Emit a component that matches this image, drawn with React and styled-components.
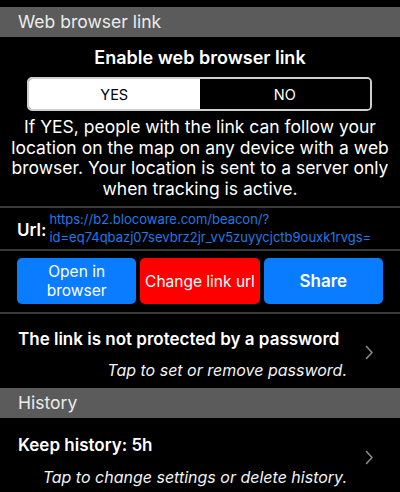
import React, { useState } from "react";
import styled, { createGlobalStyle } from "styled-components";

const GlobalStyle = createGlobalStyle`
  body {
    margin: 0;
    background: #000;
    font-family: Inter, "Liberation Sans", Arial, sans-serif;
    color: #fff;
  }
`;

const Chevron = () => (
  <ChevronBox>
    <svg width="9" height="15" viewBox="0 0 9 15">
      <path d="M1.5 1.5 L7 7.5 L1.5 13.5" fill="none" stroke="#8a8a8a" strokeWidth="1.6" strokeLinecap="round" strokeLinejoin="round" />
    </svg>
  </ChevronBox>
);

const App = () => {
  const [enabled, setEnabled] = useState(true);

  return (
    <Page>
      <GlobalStyle />
      <SectionHeader>Web browser link</SectionHeader>
      <Title>Enable web browser link</Title>
      <Segmented>
        <Segment $active={enabled} onClick={() => setEnabled(true)}>YES</Segment>
        <Segment $active={!enabled} onClick={() => setEnabled(false)}>NO</Segment>
      </Segmented>
      <Description>
        If YES, people with the link can follow your
        <br />
        location on the map on any device with a web
        <br />
        browser. Your location is sent to a server only
        <br />
        when tracking is active.
      </Description>
      <Divider />
      <UrlRow>
        <UrlLabel>Url:</UrlLabel>
        <UrlLink>
          https://b2.blocoware.com/beacon/?
          <br />
          id=eq74qbazj07sevbrz2jr_vv5zuyycjctb9ouxk1rvgs=
        </UrlLink>
      </UrlRow>
      <Divider />
      <ButtonRow>
        <ActionButton $color="#0a7cff">Open in<br />browser</ActionButton>
        <ActionButton $color="#ff0000">Change link url</ActionButton>
        <ActionButton $color="#0a7cff" $bold>Share</ActionButton>
      </ButtonRow>
      <Divider />
      <TapRow $height={74} $top={15}>
        <TapText $gap={11}>
          <RowTitle>The link is not protected by a password</RowTitle>
          <RowHint>Tap to set or remove password.</RowHint>
        </TapText>
        <Chevron />
      </TapRow>
      <SectionHeader>History</SectionHeader>
      <TapRow $height={73} $top={17}>
        <TapText $gap={12}>
          <RowTitle>Keep history: 5h</RowTitle>
          <RowHint>Tap to change settings or delete history.</RowHint>
        </TapText>
        <Chevron />
      </TapRow>
    </Page>
  );
};

export default App;

const Page = styled.div`
  width: 400px;
  height: 492px;
  overflow: hidden;
  padding-top: 7px;
  box-sizing: border-box;
  background: #000;
`;

const SectionHeader = styled.div`
  height: 30px;
  background: #5b5b5b;
  color: #ececec;
  font-size: 17.5px;
  line-height: 30px;
  padding-left: 18px;
`;

const Title = styled.div`
  margin-top: 10px;
  text-align: center;
  font-weight: 600;
  font-size: 18px;
  line-height: 22px;
`;

const Segmented = styled.div`
  display: flex;
  margin: 8px 28px 0 27px;
  height: 34px;
  box-sizing: border-box;
  border: 2px solid #cfcfcf;
  border-radius: 5px;
  overflow: hidden;
`;

const Segment = styled.div`
  flex: 1;
  display: flex;
  align-items: center;
  justify-content: center;
  font-size: 14.5px;
  background: ${({ $active }) => ($active ? "#fff" : "#000")};
  color: ${({ $active }) => ($active ? "#000" : "#fff")};
  cursor: pointer;
`;

const Description = styled.div`
  margin-top: 6px;
  text-align: center;
  white-space: nowrap;
  font-size: 17.5px;
  line-height: 20.7px;
  height: 89px;
`;

const Divider = styled.div`
  height: 2px;
  background: #3a3a3a;
`;

const UrlRow = styled.div`
  display: flex;
  align-items: center;
  height: 41px;
  padding-left: 17px;
  gap: 3px;
`;

const UrlLabel = styled.div`
  font-weight: 600;
  font-size: 17px;
  padding-top: 2px;
`;

const UrlLink = styled.div`
  color: #1f7ae6;
  font-size: 13px;
  line-height: 17.5px;
  white-space: nowrap;
`;

const ButtonRow = styled.div`
  display: flex;
  gap: 4px;
  padding: 7px 17px 8px;
  height: 61px;
  box-sizing: border-box;
`;

const ActionButton = styled.div`
  flex: 1;
  display: flex;
  align-items: center;
  justify-content: center;
  text-align: center;
  background: ${({ $color }) => $color};
  border-radius: 5px;
  font-size: ${({ $bold }) => ($bold ? 17 : 15.5)}px;
  line-height: 19px;
  font-weight: ${({ $bold }) => ($bold ? 600 : 400)};
`;

const TapRow = styled.div`
  display: flex;
  align-items: flex-start;
  height: ${({ $height }) => $height}px;
  box-sizing: border-box;
  padding: ${({ $top }) => $top}px 26px 0 18px;
`;

const TapText = styled.div`
  flex: 1;
  display: flex;
  flex-direction: column;
  gap: ${({ $gap }) => $gap}px;
  padding-right: 18px;
`;

const ChevronBox = styled.div`
  align-self: center;
  display: flex;
  margin-top: -12px;
`;

const RowTitle = styled.div`
  font-weight: 600;
  font-size: 17px;
  line-height: 20px;
  white-space: nowrap;
`;

const RowHint = styled.div`
  font-style: italic;
  font-size: 16px;
  line-height: 20px;
  text-align: right;
  color: #f2f2f2;
  white-space: nowrap;
`;
